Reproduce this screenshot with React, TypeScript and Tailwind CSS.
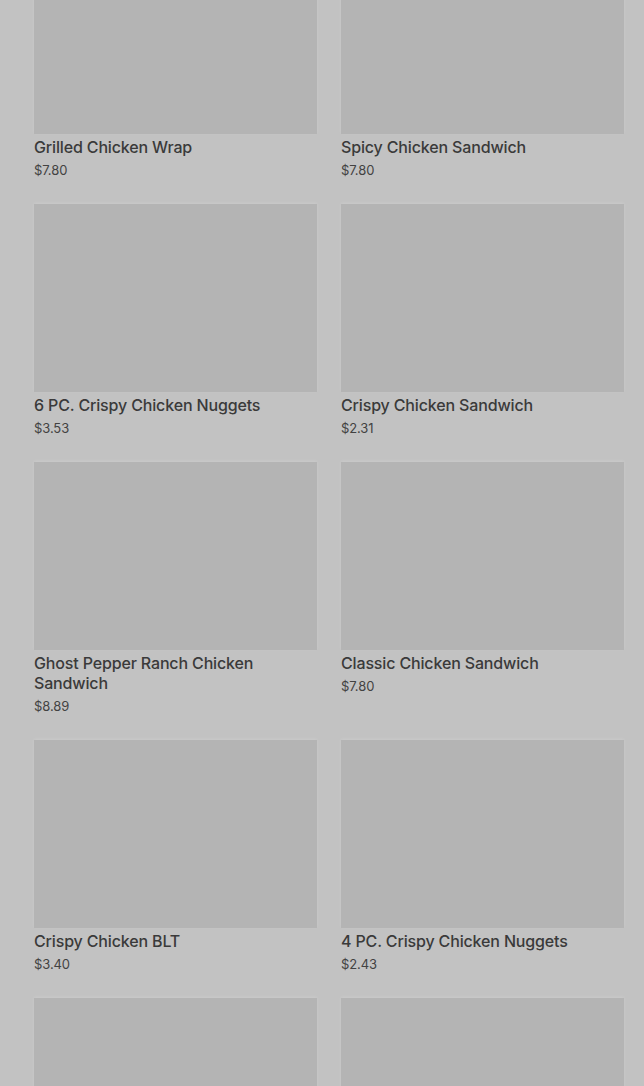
import React from "react";

const items = [
  { name: "Grilled Chicken Wrap", price: "$7.80" },
  { name: "Spicy Chicken Sandwich", price: "$7.80" },
  { name: "6 PC. Crispy Chicken Nuggets", price: "$3.53" },
  { name: "Crispy Chicken Sandwich", price: "$2.31" },
  { name: "Ghost Pepper Ranch Chicken Sandwich", price: "$8.89" },
  { name: "Classic Chicken Sandwich", price: "$7.80" },
  { name: "Crispy Chicken BLT", price: "$3.40" },
  { name: "4 PC. Crispy Chicken Nuggets", price: "$2.43" },
];

export default function App() {
  return (
    <div className="h-[1086px] w-[644px] overflow-hidden bg-[#c2c2c2] font-['Inter',sans-serif]">
      <div className="-mt-[54px] grid grid-cols-2 gap-x-6 gap-y-6 pl-[34px] pr-[20px]">
        {items.map((item) => (
          <div key={item.name} className="flex flex-col">
            <div className="h-[188px] bg-[#b4b4b4] shadow-[0_-1px_3px_rgba(255,255,255,0.15)]" />
            <h3 className="mt-[3px] text-[16px] leading-5 font-medium tracking-[-0.15px] text-[#3a3a3a]">
              {item.name}
            </h3>
            <p className="mt-[3px] text-[13px] leading-5 tracking-[-0.1px] text-[#424242]">{item.price}</p>
          </div>
        ))}
        {/* next row, cut off by the bottom of the window */}
        <div className="h-[188px] bg-[#b4b4b4] shadow-[0_-1px_3px_rgba(255,255,255,0.15)]" />
        <div className="h-[188px] bg-[#b4b4b4] shadow-[0_-1px_3px_rgba(255,255,255,0.15)]" />
      </div>
    </div>
  );
}
